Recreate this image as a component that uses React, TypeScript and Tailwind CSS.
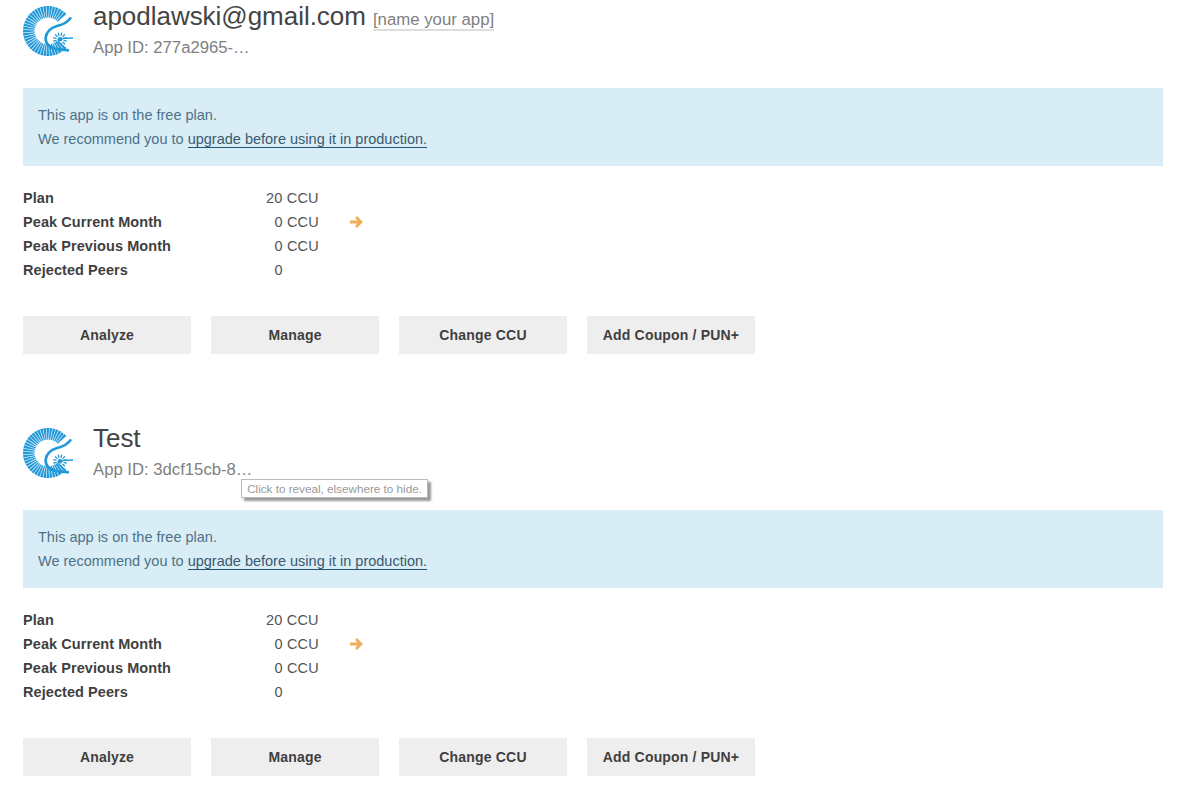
const font = { fontFamily: '"Liberation Sans", Arial, sans-serif' };

function Logo() {
  const rays = Array.from({ length: 37 }, (_, i) => {
    const deg = -46 - i * 7.45;
    const p = (r: number, d: number) => {
      const a = (d * Math.PI) / 180;
      return `${(99 + r * Math.cos(a)).toFixed(1)},${(93 + r * Math.sin(a)).toFixed(1)}`;
    };
    return [p(40, deg - 2.3), p(75, deg - 3.1), p(75, deg + 3.1), p(40, deg + 2.3)].join(" ");
  });
  const sun = Array.from({ length: 12 }, (_, i) => {
    const a = ((i * 30 + 15) * Math.PI) / 180;
    return { x1: 135 + 11 * Math.cos(a), y1: 118 + 11 * Math.sin(a), x2: 135 + 21 * Math.cos(a), y2: 118 + 21 * Math.sin(a) };
  });
  return (
    <svg viewBox="24 15 153 156" className="w-[51px] h-[52px] shrink-0">
      {rays.map((r, i) => (
        <polygon key={i} points={r} fill="#2199d8" />
      ))}
      <path d="M168 52 C158 68 142 74 126 78 C106 84 93 98 92 114 C91 132 104 143 124 147 L162 151" fill="none" stroke="#2199d8" strokeWidth="8" />
      {sun.map((r, i) => (
        <line key={i} x1={r.x1} y1={r.y1} x2={r.x2} y2={r.y2} stroke="#2199d8" strokeWidth="4" />
      ))}
      <circle cx="135" cy="118" r="7" fill="#2199d8" />
      <line x1="135" y1="116" x2="174" y2="114" stroke="#2199d8" strokeWidth="4" />
    </svg>
  );
}

function Btn({ label }: { label: string }) {
  return (
    <div className="w-[168px] h-[38px] bg-[#eeeeee] flex items-center justify-center text-[14px] font-bold text-[#3f3f3f] tracking-[0.18px]">
      {label}
    </div>
  );
}

function Row({ label, value, arrow }: { label: string; value: string; arrow?: boolean }) {
  return (
    <div className="flex h-6 items-center text-[14.5px] leading-6">
      <div className="w-[243px] font-bold text-[#3f3f3f] tracking-[0.07px]">{label}</div>
      <div className="w-[53px] whitespace-nowrap text-[#555555] tracking-[0.2px]">{value}</div>
      {arrow && (
        <svg viewBox="0 0 14 14" className="w-[14px] h-[14px] ml-[30px]">
          <path d="M1 7 H11 M7 2 L12 7 L7 12" fill="none" stroke="#f0ad5e" strokeWidth="2.8" />
        </svg>
      )}
    </div>
  );
}

function Card({ title, id, name, tooltip }: { title: string; id: string; name?: boolean; tooltip?: boolean }) {
  return (
    <section className="h-[422px]">
      <div className="flex h-[88px] pt-[1px] items-start">
        <div className="w-[70px] shrink-0 pt-[4px]">
          <Logo />
        </div>
        <div>
          <div className="flex items-baseline h-[30px]">
            <span className="text-[26px] leading-[30px] text-[#444444] tracking-[-0.03px]">{title}</span>
            {name && (
              <span className="ml-[7px] text-[16.8px] leading-[18px] text-[#808080] border-b-2 border-[#dddddd]">[name your app]</span>
            )}
          </div>
          <div className="relative mt-[7px] text-[16.7px] leading-5 text-[#808080]">
            App ID: {id}
            {tooltip && (
              <div className="absolute left-[148px] top-[19px] w-[187px] h-[19px] border border-[#bbbbbb] bg-white text-[11.7px] leading-[17px] text-center text-[#999999] whitespace-nowrap shadow-[3px_3px_2px_#999999]">
                Click to reveal, elsewhere to hide.
              </div>
            )}
          </div>
        </div>
      </div>
      <div className="bg-[#d9edf7] h-[78px] px-[15px] py-[15px] text-[14.5px] leading-6 text-[#4d7286]">
        <p>This app is on the free plan.</p>
        <p>
          We recommend you to{" "}
          <span className="text-[#3a5a6e] border-b border-[#24556f]">upgrade before using it in production.</span>
        </p>
      </div>
      <div className="mt-5">
        <Row label="Plan" value="20 CCU" />
        <Row label="Peak Current Month" value={"\u00a0\u00a00 CCU"} arrow />
        <Row label="Peak Previous Month" value={"\u00a0\u00a00 CCU"} />
        <Row label="Rejected Peers" value={"\u00a0\u00a00"} />
      </div>
      <div className="mt-[34px] flex gap-5">
        <Btn label="Analyze" />
        <Btn label="Manage" />
        <Btn label="Change CCU" />
        <Btn label="Add Coupon / PUN+" />
      </div>
    </section>
  );
}

export default function App() {
  return (
    <div className="w-[1197px] h-[795px] overflow-hidden bg-white pl-[23px] pr-[34px]" style={font}>
      <Card title="apodlawski@gmail.com" id="277a2965-…" name />
      <Card title="Test" id="3dcf15cb-8…" tooltip />
    </div>
  );
}
